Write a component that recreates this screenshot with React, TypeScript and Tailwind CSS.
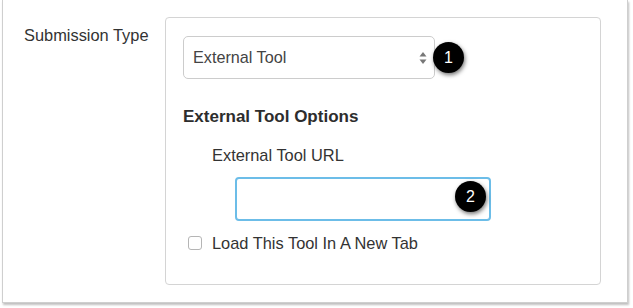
const font = { fontFamily: '"Liberation Sans", Arial, sans-serif' };

function Badge({ n }: { n: number }) {
  return (
    <div className="flex h-[31px] w-[31px] items-center justify-center rounded-full bg-black text-[16px] text-white shadow-[1px_2px_4px_rgba(0,0,0,0.55)]">
      {n}
    </div>
  );
}

export default function App() {
  return (
    <div className="h-[308px] w-[633px] bg-white" style={font}>
      <div className="ml-[2px] flex h-[303px] w-[626px] border border-t-0 border-[#cfcfcf] bg-white shadow-[1px_2px_2px_rgba(0,0,0,0.25)]">
        <div className="w-[162px] pl-[21px] pt-[25px] text-[16.4px] leading-[20px] text-[#333]">Submission Type</div>
        <div className="mt-[17px] h-[268px] w-[436px] rounded-[4px] border border-[#d4d4d4] pl-[17px] pt-[18px] text-[#333]">
          <div className="relative w-[252px]">
            <div className="flex h-[43px] items-center justify-between rounded-[5px] border border-[#ccc] pl-[9px] pr-[7px] text-[16.2px] text-[#444]">
              <span>External Tool</span>
              <svg width="8" height="14" viewBox="0 0 8 14">
                <path d="M4 1 L7.5 5.5 H0.5 Z" fill="#777" />
                <path d="M4 13 L7.5 8.5 H0.5 Z" fill="#777" />
              </svg>
            </div>
            <div className="absolute left-[250px] top-[6px]">
              <Badge n={1} />
            </div>
          </div>
          <div className="mt-[28px] text-[17px] leading-[20px] font-bold text-[#2d2d2d]">External Tool Options</div>
          <div className="ml-[29px] mt-[18px] text-[16.4px] leading-[20px]">External Tool URL</div>
          <div className="relative ml-[52px] mt-[12px] h-[44px] w-[256px] rounded-[4px] border-2 border-[#6cbde8]">
            <div className="absolute left-[218px] top-[2px]">
              <Badge n={2} />
            </div>
          </div>
          <label className="ml-[5px] mt-[12px] flex items-center gap-[10px] text-[16.4px] leading-[20px]">
            <span className="h-[14px] w-[14px] rounded-[3px] border border-[#b5b5b5] bg-white" />
            <span>Load This Tool In A New Tab</span>
          </label>
        </div>
      </div>
    </div>
  );
}
